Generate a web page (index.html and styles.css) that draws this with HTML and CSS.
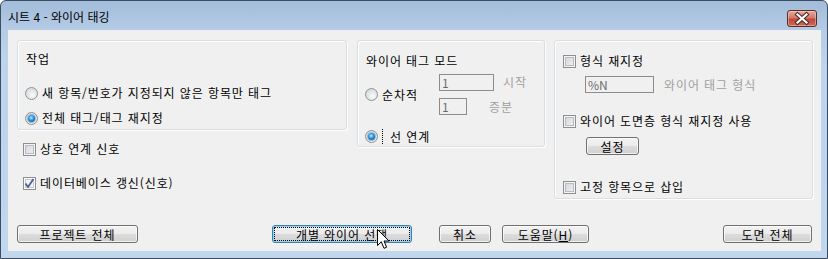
FILE: index.html
```html
<!DOCTYPE html>
<html lang="ko">
<head>
    <meta charset="UTF-8">
    <title>시트 4 - 와이어 태깅</title>
    <link rel="stylesheet" href="styles.css">
</head>
<body>
    <div class="window">
        <div class="titlebar">
            <span class="title">시트 4 - 와이어 태깅</span>
            <button class="close" aria-label="닫기">
                <svg width="28" height="15" viewBox="0 0 28 15">
                    <path d="M9.5 3.5 L18.5 11.5 M18.5 3.5 L9.5 11.5" stroke="#4a2a24" stroke-width="4.2" stroke-linecap="square"/>
                    <path d="M9.5 3.5 L18.5 11.5 M18.5 3.5 L9.5 11.5" stroke="#fff" stroke-width="2.2" stroke-linecap="square"/>
                </svg>
            </button>
        </div>

        <div class="client">
            <div class="panes">
                <!-- 작업 -->
                <div class="col col-left">
                    <div class="group group-task">
                        <div class="group-title">작업</div>
                        <label class="opt task-new"><span class="rb"></span>새 항목/번호가 지정되지 않은 항목만 태그</label>
                        <label class="opt task-all"><span class="rb on"></span>전체 태그/태그 재지정</label>
                    </div>
                    <label class="opt chk-cross"><span class="cb"></span>상호 연계 신호</label>
                    <label class="opt chk-db"><span class="cb on"><svg width="11" height="11" viewBox="0 0 11 11"><path d="M1.5 5.5 L4 9 L9.5 1" fill="none" stroke="#4a5fa0" stroke-width="1.8"/></svg></span>데이터베이스 갱신(신호)</label>
                </div>

                <!-- 와이어 태그 모드 -->
                <div class="col col-mid">
                    <div class="group group-mode">
                        <div class="group-title">와이어 태그 모드</div>
                        <div class="seq-row">
                            <label class="opt seq-opt"><span class="rb"></span>순차적</label>
                            <div class="fields">
                                <div class="field-row">
                                    <span class="input input-start">1</span>
                                    <span class="dim lbl-start">시작</span>
                                </div>
                                <div class="field-row">
                                    <span class="input input-step">1</span>
                                    <span class="dim lbl-step">증분</span>
                                </div>
                            </div>
                        </div>
                        <label class="opt wire-opt"><span class="rb on"></span><span class="focus">선 연계</span></label>
                    </div>
                </div>

                <!-- 형식 -->
                <div class="col col-right">
                    <div class="group group-format">
                        <label class="opt"><span class="cb"></span>형식 재지정</label>
                        <div class="format-row">
                            <span class="input input-format">%N</span>
                            <span class="dim lbl-format">와이어 태그 형식</span>
                        </div>
                        <label class="opt chk-layer"><span class="cb"></span>와이어 도면층 형식 재지정 사용</label>
                        <button class="btn btn-setting">설정</button>
                        <label class="opt chk-fixed"><span class="cb"></span>고정 항목으로 삽입</label>
                    </div>
                </div>
            </div>

            <div class="actions">
                <button class="btn btn-project">프로젝트 전체</button>
                <button class="btn btn-select default">개별 와이어 선택</button>
                <button class="btn btn-cancel">취소</button>
                <button class="btn btn-help">도움말(<u>H</u>)</button>
                <button class="btn btn-drawing">도면 전체</button>
            </div>
        </div>

        <svg class="cursor" width="14" height="21" viewBox="0 0 14 21">
            <path d="M0.5 0.5 L0.5 16.5 L4.3 12.8 L7 19.3 L9.6 18.2 L7 12 L12 12 Z" fill="#fff" stroke="#000" stroke-width="1" stroke-linejoin="miter"/>
        </svg>
    </div>
</body>
</html>
```

FILE: styles.css
```css
* {
    margin: 0;
    padding: 0;
    box-sizing: border-box;
}

body {
    width: 828px;
    height: 259px;
    overflow: hidden;
    font-family: "Noto Sans CJK KR", "Noto Sans", sans-serif;
    font-size: 12px;
    letter-spacing: 0.9px;
    color: #000;
    background: #fff;
}

.window {
    position: relative;
    width: 828px;
    height: 259px;
    border: 1px solid #3b4d60;
    border-radius: 6px 6px 0 0;
    background: linear-gradient(#a2bcd9, #b3cbe5 28px, #bdd4ec 60px, #c1d7ee);
    padding: 0 6px 7px 7px;
    display: flex;
    flex-direction: column;
}

/* title bar */
.titlebar {
    height: 29px;
    display: flex;
    align-items: flex-start;
    justify-content: space-between;
}

.title {
    margin-top: 8px;
    line-height: 16px;
    letter-spacing: 0;
}

.close {
    width: 30px;
    height: 17px;
    margin-top: 9px;
    margin-right: 4px;
    border: 1px solid #5e2a22;
    border-radius: 3px;
    background: linear-gradient(#e6a99f, #d4796b 45%, #c0483a 55%, #cf6a58);
    box-shadow: inset 0 0 0 1px rgba(255,255,255,0.35);
    display: flex;
    align-items: center;
    justify-content: center;
}

/* client area */
.client {
    flex: 1;
    background: #f0f0f0;
    display: flex;
    flex-direction: column;
    padding: 10px 8px 8px 9px;
}

.panes {
    display: flex;
    align-items: flex-start;
}

.col-left {
    width: 330px;
}

.col-mid {
    width: 188px;
    margin-left: 10px;
}

.col-right {
    width: 259px;
    margin-left: 9px;
}

.group {
    border: 1px solid #d5dfe5;
    border-radius: 3px;
    box-shadow: inset 1px 1px 0 #fff, 1px 1px 0 #fff;
}

.group-title {
    height: 16px;
    line-height: 16px;
    margin-left: 1px;
}

.opt {
    display: flex;
    align-items: center;
    height: 16px;
    line-height: 16px;
    white-space: nowrap;
}

/* radio buttons */
.rb {
    width: 13px;
    height: 13px;
    margin-right: 4px;
    border-radius: 50%;
    border: 1px solid #8d9299;
    background: radial-gradient(circle at 60% 65%, #fbfbfb 0, #e6e6e6 45%, #cfd1d4 100%);
    display: flex;
    align-items: center;
    justify-content: center;
    flex-shrink: 0;
}

.rb.on::after {
    content: "";
    width: 7px;
    height: 7px;
    border-radius: 50%;
    background: radial-gradient(circle at 45% 40%, #c6f1ff 0, #39a9ec 35%, #0f5aa5 75%, #0a3f7a 100%);
    box-shadow: 0 0 0 1px #9cb6d1;
}

/* check boxes */
.cb {
    width: 13px;
    height: 13px;
    margin-right: 4px;
    border: 1px solid #8e8f8f;
    background: linear-gradient(135deg, #d0d3d8, #f3f3f3);
    box-shadow: inset 0 0 0 1px #f4f4f4, inset 0 0 0 2px #b8bcc2;
    display: flex;
    align-items: center;
    justify-content: center;
    flex-shrink: 0;
}

.cb.on {
    background: #f4f4f4;
    box-shadow: inset 0 0 0 1px #fff, inset 0 0 0 2px #c5c8cc;
}

/* 작업 group */
.group-task {
    height: 90px;
    padding: 10px 7px 0 7px;
}

.task-new {
    margin-top: 18px;
}

.task-all {
    margin-top: 9px;
}

.col-left > .opt {
    padding-left: 6px;
}

.chk-cross {
    margin-top: 11px;
}

.chk-db {
    margin-top: 18px;
}

/* 와이어 태그 모드 group */
.group-mode {
    height: 107px;
    padding: 12px 7px 0 7px;
}

.seq-row {
    display: flex;
    align-items: center;
    margin-top: 5px;
}

.seq-opt {
    width: 74px;
}

.fields {
    display: flex;
    flex-direction: column;
    gap: 7px;
}

.field-row {
    display: flex;
    align-items: center;
}

.input {
    display: block;
    height: 17px;
    border: 1px solid #8c8c8c;
    background: #f0f0f0;
    color: #6d6d6d;
    line-height: 15px;
    padding-left: 2px;
    letter-spacing: 0;
}

.dim {
    color: #a0a0a0;
    line-height: 16px;
}

.input-start {
    width: 55px;
}

.lbl-start {
    margin-left: 9px;
    margin-top: -2px;
}

.input-step {
    width: 28px;
}

.lbl-step {
    margin-left: 22px;
}

.wire-opt {
    margin-top: 13px;
}

.focus {
    border-left: 1px dotted #000;
    padding-left: 7px;
    height: 15px;
    line-height: 15px;
}

/* 형식 group */
.group-format {
    height: 159px;
    padding: 12px 8px 0 8px;
}

.format-row {
    display: flex;
    align-items: center;
    margin-top: 7px;
    padding-left: 22px;
}

.input-format {
    width: 69px;
}

.lbl-format {
    margin-left: 10px;
}

.chk-layer {
    margin-top: 20px;
}

.chk-fixed {
    margin-top: 24px;
}

/* push buttons */
.btn {
    display: block;
    height: 18px;
    border: 1px solid #707070;
    border-radius: 3px;
    background: linear-gradient(#f2f2f2 0%, #ebebeb 50%, #dddddd 50%, #cfcfcf 100%);
    box-shadow: inset 0 0 0 1px rgba(255,255,255,0.7);
    font-family: inherit;
    font-size: 12px;
    letter-spacing: inherit;
    line-height: 15px;
    color: #000;
    text-align: center;
}

.btn u {
    text-decoration: underline;
    text-underline-offset: 1px;
}

.btn-setting {
    width: 53px;
    margin-top: 8px;
    margin-left: 23px;
}

.actions {
    display: flex;
    margin-top: auto;
}

.btn-project {
    width: 121px;
}

.btn-select {
    width: 140px;
    margin-left: 134px;
}

.btn.default {
    border-color: #3c7fb1;
    box-shadow: inset 0 0 0 1px #8fd3f5;
    outline: 1px dotted #000;
    outline-offset: -3px;
}

.btn-cancel {
    width: 52px;
    margin-left: 27px;
}

.btn-help {
    width: 87px;
    margin-left: 11px;
}

.btn-drawing {
    width: 89px;
    margin-left: auto;
    margin-right: 1px;
}

/* mouse pointer over the dialog */
.cursor {
    position: absolute;
    left: 376px;
    top: 228px;
}
```
